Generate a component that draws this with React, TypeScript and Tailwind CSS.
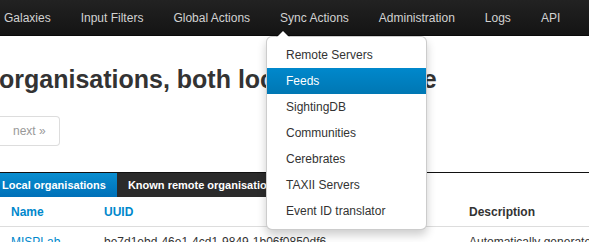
import React from "react";

const navItems = ["Galaxies", "Input Filters", "Global Actions", "Sync Actions", "Administration", "Logs", "API"];
const menuItems = ["Remote Servers", "Feeds", "SightingDB", "Communities", "Cerebrates", "TAXII Servers", "Event ID translator"];

export default function App() {
  return (
    <div
      className="relative w-[589px] h-[242px] overflow-hidden bg-white text-[#333] text-[12px]"
      style={{ fontFamily: '"Liberation Sans", Arial, sans-serif' }}
    >
      {/* Navbar */}
      <div className="h-[36px] bg-gradient-to-b from-[#222222] to-[#141414] border-b border-[#0a0a0a]">
        <ul className="flex h-full ml-[-11px]">
          {navItems.map((n) => (
            <li key={n} className="flex items-center px-[15px] h-full text-[#d2d2d2] whitespace-nowrap">
              {n}
            </li>
          ))}
        </ul>
      </div>

      {/* Heading */}
      <h2 className="mt-[27px] ml-[-1px] text-[25px] leading-[32px] font-bold text-[#333] whitespace-nowrap">
        organisations, both local and remote
      </h2>

      {/* Pagination */}
      <div className="mt-[21px] ml-[-60px] flex">
        <span className="px-[12px] h-[30px] leading-[28px] border border-[#ddd] text-[#999] w-[60px]">&laquo; prev</span>
        <span className="px-[13px] h-[30px] leading-[28px] border border-l-0 border-[#ddd] rounded-r-[4px] text-[#999]">next &raquo;</span>
      </div>

      {/* Tabs */}
      <div className="mt-[26px] flex border-t border-[#111]">
        <div className="shrink-0 ml-[-10px] h-[24px] leading-[24px] pl-[12px] pr-[11px] bg-gradient-to-b from-[#0a8ed0] to-[#0070b8] text-white font-bold text-[11px] whitespace-nowrap">
          Local organisations
        </div>
        <div className="shrink-0 h-[24px] leading-[24px] pl-[11px] pr-[12px] bg-[#2b2b2b] text-white font-bold text-[11px] whitespace-nowrap">
          Known remote organisations
        </div>
      </div>

      {/* Table */}
      <div className="ml-[-5px]">
        <div className="flex h-[30px] items-center border-b border-[#ddd] font-bold whitespace-nowrap">
          <div className="shrink-0 w-[109px] pl-[16px] text-[#0088cc]">Name</div>
          <div className="shrink-0 w-[365px] text-[#0088cc]">UUID</div>
          <div className="shrink-0 text-[#333]">Description</div>
        </div>
        <div className="flex h-[30px] items-center whitespace-nowrap">
          <div className="shrink-0 w-[109px] pl-[16px] text-[#0088cc]">MISPLab</div>
          <div className="shrink-0 w-[365px]">be7d1ebd-46e1-4cd1-9849-1b06f0850df6</div>
          <div className="shrink-0">Automatically generated</div>
        </div>
      </div>

      {/* Dropdown */}
      <div className="absolute left-[266px] top-[36px] w-[161px] bg-white border border-[rgba(0,0,0,0.2)] rounded-[6px] py-[5px] shadow-[0_5px_10px_rgba(0,0,0,0.2)]">
        <div className="absolute left-[9px] top-[-7px] w-0 h-0 border-l-[7px] border-r-[7px] border-b-[7px] border-l-transparent border-r-transparent border-b-[rgba(0,0,0,0.2)]" />
        <div className="absolute left-[10px] top-[-6px] w-0 h-0 border-l-[6px] border-r-[6px] border-b-[6px] border-l-transparent border-r-transparent border-b-white" />
        {menuItems.map((m) => (
          <div
            key={m}
            className={
              m === "Feeds"
                ? "h-[26px] leading-[26px] px-[19px] bg-gradient-to-b from-[#0088cc] to-[#0077b3] text-white"
                : "h-[26px] leading-[26px] px-[19px] text-[#333]"
            }
          >
            {m}
          </div>
        ))}
      </div>
    </div>
  );
}
